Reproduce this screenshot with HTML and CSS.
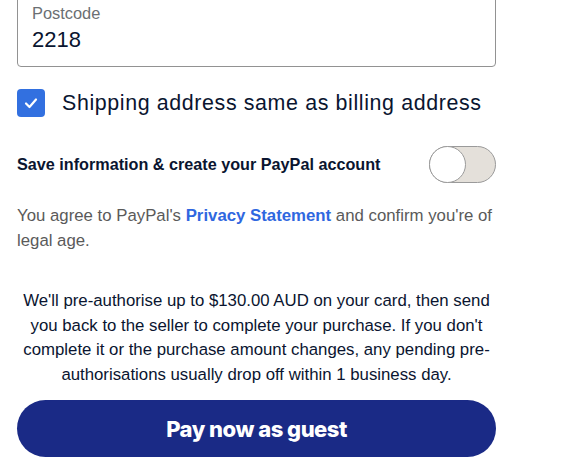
FILE: index.html
```html
<!DOCTYPE html>
<html lang="en">
<head>
<meta charset="utf-8">
<title>Guest checkout</title>
<link rel="stylesheet" href="styles.css">
</head>
<body>
<main class="form">
  <div class="field">
    <label class="field-label">Postcode</label>
    <div class="field-value">2218</div>
  </div>

  <div class="check-row">
    <span class="checkbox">
      <svg width="16" height="16" viewBox="0 0 16 16" aria-hidden="true">
        <polyline points="3,8.5 6.5,12 13,4.5" fill="none" stroke="#fff" stroke-width="2.2" stroke-linecap="round" stroke-linejoin="round"/>
      </svg>
    </span>
    <span class="check-label">Shipping address same as billing address</span>
  </div>

  <div class="toggle-row">
    <span class="toggle-label">Save information &amp; create your PayPal account</span>
    <span class="toggle"><span class="knob"></span></span>
  </div>

  <p class="legal">You agree to PayPal's <a class="link" href="#">Privacy Statement</a> and confirm you're of legal age.</p>

  <p class="notice">We'll pre-authorise up to $130.00 AUD on your card, then send you back to the seller to complete your purchase. If you don't complete it or the purchase amount changes, any pending pre-authorisations usually drop off within 1 business day.</p>

  <button class="pay-btn" type="button">Pay now as guest</button>
</main>
</body>
</html>
```

FILE: styles.css
```css
html, body {
  margin: 0;
  padding: 0;
  background: #ffffff;
}

body {
  font-family: "Liberation Sans", Arial, sans-serif;
  color: #001435;
  overflow: hidden;
}

.form {
  width: 479px;
  margin-left: 17px;
  display: flex;
  flex-direction: column;
}

.field {
  margin-top: -5px;
  height: 72px;
  box-sizing: border-box;
  border: 1px solid #929292;
  border-radius: 4px;
  padding: 7px 14px 0;
  display: flex;
  flex-direction: column;
}

.field-label {
  font-size: 16.4px;
  line-height: 20px;
  color: #6b6f73;
}

.field-value {
  font-size: 22px;
  line-height: 26px;
  margin-top: 4px;
  color: #0a1530;
}

.check-row {
  margin-top: 22px;
  display: flex;
  align-items: center;
  gap: 17px;
}

.checkbox {
  width: 28px;
  height: 28px;
  border-radius: 4px;
  background: #3270e0;
  display: flex;
  align-items: center;
  justify-content: center;
  flex: none;
}

.check-label {
  font-size: 21.4px;
  letter-spacing: 0.62px;
  color: #0a1530;
}

.toggle-row {
  margin-top: 29px;
  display: flex;
  align-items: center;
  justify-content: space-between;
}

.toggle-label {
  font-size: 16.2px;
  font-weight: 700;
  color: #0a1530;
}

.toggle {
  width: 67px;
  height: 37px;
  box-sizing: border-box;
  border: 1px solid #9a9a9a;
  border-radius: 19px;
  background: #e4e0da;
  position: relative;
  flex: none;
}

.knob {
  position: absolute;
  left: -1px;
  top: -1px;
  width: 37px;
  height: 37px;
  box-sizing: border-box;
  border: 1px solid #9a9a9a;
  border-radius: 50%;
  background: #ffffff;
}

.legal {
  margin: 20px 0 0;
  font-size: 16.8px;
  line-height: 25px;
  color: #5a5a5a;
}

.link {
  color: #2f67e0;
  font-weight: 700;
  text-decoration: none;
}

.notice {
  margin: 36px 0 0;
  font-size: 16.8px;
  line-height: 24.6px;
  text-align: center;
  color: #0a1530;
  padding: 0 2px;
}

.pay-btn {
  margin-top: 13px;
  height: 57px;
  border: none;
  border-radius: 29px;
  background: #1a2a86;
  color: #ffffff;
  font-family: "Inter", "Liberation Sans", sans-serif;
  font-size: 22px;
  font-weight: 800;
  letter-spacing: -0.5px;
  cursor: pointer;
}
```
